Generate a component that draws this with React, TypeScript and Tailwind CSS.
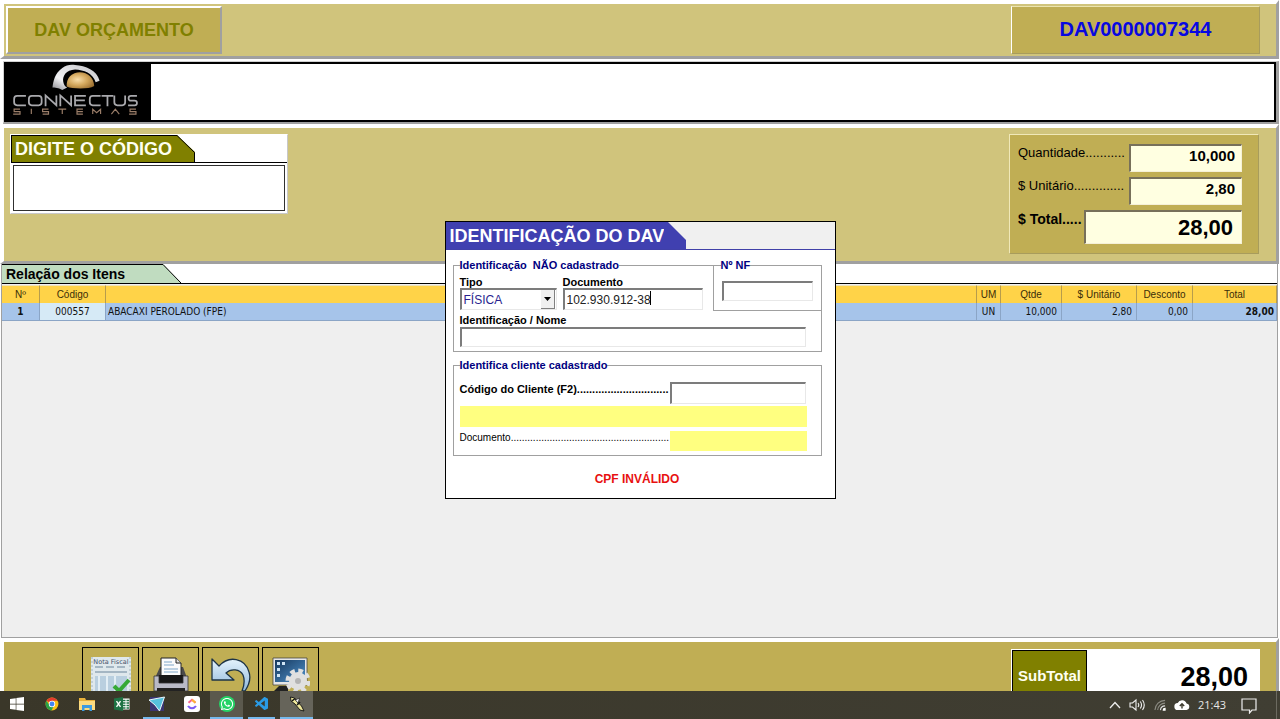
import React from "react";
import { FaWindows, FaWhatsapp } from "react-icons/fa";
import { VscVscode } from "react-icons/vsc";

const arial = "font-['Liberation_Sans',Arial,sans-serif]";
const tahoma = "font-['DejaVu_Sans_Condensed',Tahoma,sans-serif]";
const sunken =
  "border-t-2 border-l-2 border-r border-b border-t-[#7c7c7c] border-l-[#7c7c7c] border-r-[#e8e8e8] border-b-[#e8e8e8] outline-none";
const raisedPanel =
  "border-t-4 border-l-4 border-r-3 border-b-3 border-t-white border-l-white border-r-[#a0a0a0] border-b-[#a0a0a0] mr-px";

function Logo() {
  return (
    <div className="flex w-[147px] shrink-0 flex-col items-center bg-black">
      <svg viewBox="0 0 147 57" className="h-[57px] w-full" role="img" aria-label="Connectus Sistemas">
        <defs>
          <radialGradient id="ball" cx="0.4" cy="0.45" r="0.7">
            <stop offset="0" stopColor="#f8deaa" />
            <stop offset="0.5" stopColor="#d3a75c" />
            <stop offset="1" stopColor="#94692c" />
          </radialGradient>
          <linearGradient id="arc" x1="0" y1="1" x2="1" y2="0">
            <stop offset="0" stopColor="#88888d" />
            <stop offset="0.3" stopColor="#f2f2f4" />
            <stop offset="1" stopColor="#c4c4c8" />
          </linearGradient>
        </defs>
        <path d="M48 24C49 17 50 10 58 4 62 1 66 0.500 71 1c11 1 22 5 25 16l-4 1.500C89 9 80 6 71 5.500 62 6 58 12 59 18c.5 3 2 5 4 6l-5 2.500C55 25 53 24 48 24z" fill="url(#arc)" />
        <path d="M62.500 23C62 14 68 8.500 76 8.500s14 5.500 14.500 14c-3 2-8 2.500-14 2.500s-11-.5-14-2z" fill="url(#ball)" />
        <g transform="translate(-1 -1)">
          <g fill="none" stroke="#a9a9ad" strokeWidth="1.8">
            <path d="M22 33.500H13q-3 0-3 3V40q0 3 3 3h9" />
            <rect x="25" y="33.500" width="13" height="9.500" rx="3" />
            <path d="M42 44V33l11 10V33M57 44V33l11 10V33" />
            <path d="M83 33.500H72V43h11M72 38h10" />
            <path d="M98 33.500h-8q-3 0-3 3V40q0 3 3 3h8" />
            <path d="M99 33.500h12M105 33.500V44" />
            <path d="M112 33v7q0 3 3 3h5q3 0 3-3V33" />
            <path d="M135 33.500h-6q-2.500 0-2.500 2.400T129 38.300h3.500q2.500 0 2.500 2.400T132.500 43H126" />
          </g>
          <path
            d="M16 47h-6v2.500h6V52H9M27.500 46.500V52M45 47h-6v2.500h6V52h-6M55 47h8M59 47v5M80 47h-6v5h6M74 49.500h6M90 52v-5l4 3.500 4-3.500v5M109 52l4-5 4 5M134 47h-6v2.500h6V52h-7"
            fill="none"
            stroke="#9a7d68"
            strokeWidth="1.200"
          />
        </g>
      </svg>
    </div>
  );
}

function InvoiceIcon() {
  return (
    <svg viewBox="0 0 40 34" className="h-[34px] w-10">
      <path d="M0 0h40v34H0z" fill="#dfe8ec" />
      <path d="M1 0v34M39 0v34" stroke="#b9c8cf" strokeWidth="1.500" strokeDasharray="2 2" />
      <text x="20" y="7" textAnchor="middle" fontSize="6.500" fill="#46536b" fontFamily="DejaVu Sans">Nota Fiscal</text>
      <path d="M4 10h8M15 10h8M26 10h8M4 15h32" stroke="#a4b6c3" strokeWidth="2.200" />
      <path d="M4 19h32v15H4z" fill="#b9cfdf" />
      <path d="M8 19v15M16 19v15M24 19v15" stroke="#e2eef5" strokeWidth="2" />
      <path d="M23 29l5 5L38 23" fill="none" stroke="#35a935" strokeWidth="4" />
    </svg>
  );
}

function PrinterIcon() {
  return (
    <svg viewBox="0 0 36 34" className="h-[34px] w-9">
      <path d="M2 21L7 10h23l4 11z" fill="#4a4a4a" />
      <path d="M8 1h15l5 5v14H8z" fill="#fbfbfb" stroke="#222" />
      <path d="M23 1v5h5" fill="#ddd" stroke="#222" />
      <path d="M11 5h8M11 8h10M11 12h14M11 15h14" stroke="#a9c3da" strokeWidth="1.500" />
      <path d="M6 18h24l2 10H4z" fill="#161616" />
      <path d="M1 19h5v7h24v-7h5v15H1z" fill="#b9bac6" stroke="#333" strokeWidth="0.800" />
      <path d="M4 31h28v3H4z" fill="#222" />
    </svg>
  );
}

function UndoIcon() {
  return (
    <svg viewBox="0 0 42 34" className="h-[34px] w-[42px]">
      <defs>
        <linearGradient id="undo" x1="0" y1="0" x2="0" y2="1">
          <stop offset="0" stopColor="#e4f3fc" />
          <stop offset="1" stopColor="#8fb8dc" />
        </linearGradient>
      </defs>
      <path
        d="M2 2v21h22l-8-7c5-5 14-4 17 2 2 5 1 11-1 16h3c4-6 6-13 4-19C35 1 19-2 9 9z"
        fill="url(#undo)"
        stroke="#1d3447"
        strokeWidth="1.300"
        strokeLinejoin="round"
      />
    </svg>
  );
}

function SettingsIcon() {
  return (
    <svg viewBox="0 0 38 34" className="h-[34px] w-[38px]">
      <defs>
        <linearGradient id="screen" x1="0" y1="0" x2="1" y2="1">
          <stop offset="0" stopColor="#16375c" />
          <stop offset="1" stopColor="#4f92cc" />
        </linearGradient>
      </defs>
      <path d="M1 1h34v27H1z" fill="#e6e6e6" stroke="#333" strokeWidth="0.700" />
      <path d="M3 3h30v22H3z" fill="url(#screen)" />
      <path d="M5 5h3v3H5zM10 5h3v3h-3zM5 11h3v3H5zM5 17h3v3H5z" fill="#cfe4f5" />
      <path d="M2 34l5-5h9v5z" fill="#222" />
      <circle cx="26" cy="24" r="10" fill="none" stroke="#e0e0e0" strokeWidth="5" strokeDasharray="4.500 3.350" />
      <circle cx="26" cy="24" r="9" fill="#e0e0e0" />
      <circle cx="26" cy="24" r="3" fill="#b4b4b4" />
    </svg>
  );
}

const tools = [
  { label: "Nota Fiscal", icon: <InvoiceIcon /> },
  { label: "Imprimir", icon: <PrinterIcon /> },
  { label: "Desfazer", icon: <UndoIcon /> },
  { label: "Configurações", icon: <SettingsIcon /> },
];

function ChromeIcon() {
  return (
    <svg viewBox="0 0 24 24" className="size-3.5">
      <circle cx="12" cy="12" r="11" fill="#fbc116" />
      <path d="M12 12L2.500 6.500A11 11 0 0 1 21.500 6.500H12z" fill="#e33b2e" />
      <path d="M2.500 6.500A11 11 0 0 0 11 23l5-9-4-2-4 2z" fill="#2aa147" />
      <circle cx="12" cy="12" r="5.500" fill="#fff" />
      <circle cx="12" cy="12" r="4.200" fill="#4285f4" />
    </svg>
  );
}

function FolderIcon() {
  return (
    <svg viewBox="0 0 16 14" className="h-3.5 w-4">
      <path d="M0 1h6l1 2h9v10H0z" fill="#e9b23c" />
      <path d="M0 4h16v9H0z" fill="#fcdb7f" />
      <path d="M3 14V8h10v6h-2.500v-3h-5v3z" fill="#3d9be0" />
    </svg>
  );
}

function ExcelIcon() {
  return (
    <svg viewBox="0 0 16 14" className="h-3.5 w-4">
      <path d="M8 1.500h7.500v11H8z" fill="#fff" />
      <path d="M9 3.500h2.500M12.500 3.500H15M9 6h2.500M12.500 6H15M9 8.500h2.500M12.500 8.500H15M9 11h2.500M12.500 11H15" stroke="#1f7345" strokeWidth="1.300" />
      <path d="M0 1.500L9 0v14l-9-1.500z" fill="#1f7345" />
      <path d="M2.500 4.200l4 5.600M6.500 4.200l-4 5.600" stroke="#fff" strokeWidth="1.400" />
    </svg>
  );
}

function ArrowAppIcon() {
  return (
    <svg viewBox="0 0 16 16" className="size-4">
      <path d="M1 1h14v14H1z" fill="#3a3470" />
      <path d="M0 4L15.500 1 10.500 15 6 9z" fill="#56c0dc" stroke="#e9f6fa" strokeWidth="1" />
    </svg>
  );
}

function ClickUpIcon() {
  return (
    <svg viewBox="0 0 16 16" className="size-4">
      <rect width="16" height="16" rx="3" fill="#fff" />
      <path d="M4.500 6.700L8 3.700l3.500 3" fill="none" stroke="#f7668f" strokeWidth="2" />
      <path d="M8 3.700l3.500 3" stroke="#fdb532" strokeWidth="2" />
      <path d="M4 10c2.200 3 5.800 3 8 0" fill="none" stroke="#7b5cf5" strokeWidth="2.100" />
    </svg>
  );
}

function BeeIcon() {
  return (
    <svg viewBox="0 0 16 16" className="size-4">
      <path d="M1.500 1l4 1 2 3 5 5 2.500 5-4-1-5-6-4-3z" fill="#efe79a" stroke="#111" strokeWidth="0.900" />
      <path d="M3 5l3-2.500M8 9l3-3" stroke="#111" strokeWidth="1.600" />
      <path d="M6.500 4l4-2-1.500 5z" fill="#fff" stroke="#111" strokeWidth="0.600" />
    </svg>
  );
}

const idleApp = "w-[33px] border-transparent";
const openApp = "mx-[3px] w-[27px] border-[#76b9ed]";

const taskApps = [
  { label: "Iniciar", icon: <FaWindows className="size-4 text-white" />, style: idleApp },
  { label: "Chrome", icon: <ChromeIcon />, style: idleApp },
  { label: "Explorador", icon: <FolderIcon />, style: idleApp },
  { label: "Excel", icon: <ExcelIcon />, style: idleApp },
  { label: "Aplicativo", icon: <ArrowAppIcon />, style: openApp },
  { label: "ClickUp", icon: <ClickUpIcon />, style: idleApp },
  {
    label: "WhatsApp",
    icon: (
      <span className="flex size-4 items-center justify-center rounded-full bg-[#25d366]">
        <FaWhatsapp className="size-3.5 text-white" />
      </span>
    ),
    style: "w-[33px] border-[#76b9ed] bg-[#5b594d]",
  },
  { label: "VS Code", icon: <VscVscode className="size-4 text-[#2a9be6]" />, style: openApp },
  { label: "DAV", icon: <BeeIcon />, style: "w-[33px] border-[#76b9ed] bg-[#66645a]" },
];

function TaskBar() {
  return (
    <nav className="flex h-7 shrink-0 items-stretch justify-between bg-linear-to-r from-[#3a3729] to-[#403e33]">
      <div className="flex gap-0.5">
        {taskApps.map((app) => (
          <button
            key={app.label}
            aria-label={app.label}
            className={`flex items-center justify-center border-b-2 ${app.style}`}
          >
            {app.icon}
          </button>
        ))}
      </div>
      <div className="mr-[3px] flex items-center border-r border-[#6c6a60] pr-[19px] text-[#e8e8e8]">
        <svg viewBox="0 0 12 8" className="mr-2 h-2 w-3" fill="none" stroke="#eee" strokeWidth="1.300">
          <path d="M1 7l5-5.500L11 7" />
        </svg>
        <svg viewBox="0 0 17 14" className="mr-2 h-3.5 w-[17px]" fill="none" stroke="#eee" strokeWidth="1.100">
          <path d="M1 5h2.500L7 2v10L3.500 9H1zM9 5q1.500 2 0 4M11.300 3.500q2.500 3.500 0 7M13.500 2q3.500 5 0 10" />
        </svg>
        <svg viewBox="0 0 13 13" className="mr-2 size-3" fill="none" strokeWidth="1.200">
          <path d="M1 12A11 11 0 0 1 12 1.500M4 12a8 8 0 0 1 8-7.500" stroke="#8d8c84" />
          <path d="M7 12a5 5 0 0 1 5-4.500" stroke="#ddd" />
          <path d="M10 12a2 2 0 0 1 2-2v2z" fill="#fff" stroke="#fff" />
        </svg>
        <svg viewBox="0 0 16 12" className="mr-2 h-3 w-4">
          <path d="M4 11a3.500 3.500 0 0 1-.3-7A4.800 4.800 0 0 1 12.600 4.500 3.300 3.300 0 0 1 12.500 11z" fill="#fff" />
          <path d="M8 9.500V5M5.800 7L8 4.700 10.200 7" fill="none" stroke="#3d3a2e" strokeWidth="1.400" />
        </svg>
        <span className="mr-[15px] font-['Open_Sans','Noto_Sans',sans-serif] text-[11px]">21:43</span>
        <svg viewBox="0 0 16 16" className="mt-0.5 size-4" fill="none" stroke="#eee" strokeWidth="1.200">
          <path d="M1 1h14v11h-4l-2.500 3v-3H1z" />
        </svg>
      </div>
    </nav>
  );
}

function IdentificationDialog() {
  const label = "block text-[11px] leading-3 font-bold text-black";
  const legend = "text-[11px] leading-3 font-bold whitespace-pre text-[#000080]";
  return (
    <div className="absolute inset-0 flex items-center justify-center pt-px">
      <section role="dialog" aria-label="Identificação do DAV" className="w-[391px] border border-black bg-white pb-3">
        <header className="flex h-7 border-b border-[#4040a8] bg-[#f0f0f0]">
          <h2 className="bg-[#4040b0] pl-1 text-lg leading-[29px] font-bold whitespace-nowrap text-white">IDENTIFICAÇÃO DO DAV</h2>
          <svg viewBox="0 0 22 27" className="h-[27px] w-[22px]">
            <path d="M0 0h4l18 18v9H0z" fill="#4040b0" />
          </svg>
        </header>

        <div className="relative mr-[13px] ml-[7px] mt-[9px]">
          <fieldset className="min-w-0 border border-[#a0a0a0] pb-1">
            <legend className={`${legend} ml-1.5`}>{"Identificação  NÃO cadastrado"}</legend>
            <div className="mt-[5px] flex gap-1.5 pl-1.5">
              <div className="w-[97px]">
                <label htmlFor="tipo" className={label}>Tipo</label>
                <div className="relative">
                  <select id="tipo" defaultValue="FÍSICA" className={`${sunken} block h-[22px] w-full appearance-none bg-white pl-0.5 text-xs text-[#2a1f8f]`}>
                    <option>FÍSICA</option>
                    <option>JURÍDICA</option>
                  </select>
                  <span className="pointer-events-none absolute top-0.5 right-0.5 bottom-px flex w-3.5 items-center justify-center border-r border-b border-[#808080] bg-[#f0f0f0]">
                    <svg viewBox="0 0 7 4" className="h-1 w-[7px]">
                      <path d="M0 0h7L3.500 4z" fill="#000" />
                    </svg>
                  </span>
                </div>
              </div>
              <div className="w-[140px]">
                <label htmlFor="documento" className={label}>Documento</label>
                <div className="relative">
                  <input id="documento" defaultValue="102.930.912-38" className={`${sunken} block h-[22px] w-full bg-white pl-0.5 text-xs text-[#222]`} />
                  <span className="absolute top-[3px] left-[87px] h-3.5 w-px bg-black" />
                </div>
              </div>
            </div>
            <div className="mt-1 pr-[15px] pl-1.5">
              <label htmlFor="nome" className={label}>Identificação / Nome</label>
              <input id="nome" className={`${sunken} mt-px block h-5 w-full bg-white text-xs`} />
            </div>
          </fieldset>
          <fieldset className="absolute top-0 right-0 w-[109px] min-w-0 border border-[#a0a0a0] bg-white px-2 pb-[9px]">
            <legend className={`${legend} -ml-px`}>Nº NF</legend>
            <input aria-label="Nº NF" className={`${sunken} mt-2.5 block h-5 w-full bg-white text-xs`} />
          </fieldset>
        </div>

        <fieldset className="mr-[13px] ml-[7px] mt-[7px] min-w-0 border border-[#a0a0a0] pr-3.5 pb-1 pl-1.5">
          <legend className={legend}>Identifica cliente cadastrado</legend>
          <div className="mt-[11px] flex">
            <label htmlFor="cliente" className="w-[210px] text-[11px] leading-[14px] font-bold whitespace-nowrap">
              Código do Cliente (F2)..............................
            </label>
            <input id="cliente" className={`${sunken} mr-px h-[22px] min-w-0 flex-1 bg-white text-xs`} />
          </div>
          <output className="mt-0.5 block h-[21px] bg-[#ffff80]" />
          <div className="mt-1 flex h-5">
            <span className="w-[210px] text-[10px] leading-[14px] whitespace-nowrap">
              Documento.........................................................
            </span>
            <output className="flex-1 bg-[#ffff80]" />
          </div>
        </fieldset>
        <p className="mt-4 pr-1.5 text-center text-xs leading-[14px] font-bold text-[#e81010]">CPF INVÁLIDO</p>
      </section>
    </div>
  );
}

function Totals() {
  const field =
    "min-w-0 flex-1 border-t-2 border-l-2 border-r border-b border-t-[#77705a] border-l-[#77705a] border-r-[#f5f0d8] border-b-[#f5f0d8] bg-[#ffffe1] text-right font-bold outline-none";
  const label = "w-[111px] text-[13px] leading-[18px] whitespace-nowrap";
  return (
    <div className="mr-[17px] flex h-[120px] w-[250px] flex-col gap-[5px] border border-t-[#f0e8b8] border-r-[#a89c5c] border-b-[#a89c5c] border-l-[#f0e8b8] bg-[#c0ae54] pt-[9px] pr-4 pl-2">
      <div className="flex h-7">
        <label htmlFor="qtd" className={label}>Quantidade...........</label>
        <input id="qtd" readOnly value="10,000" className={`${field} pr-1.5 pb-1 text-[15px]`} />
      </div>
      <div className="flex h-7">
        <label htmlFor="unit" className={label}>$ Unitário..............</label>
        <input id="unit" readOnly value="2,80" className={`${field} pr-1.5 pb-1 text-[15px]`} />
      </div>
      <div className="flex h-[34px]">
        <label htmlFor="total" className="w-[66px] text-sm leading-[18px] font-bold whitespace-nowrap">$ Total.....</label>
        <input id="total" readOnly value="28,00" className={`${field} pr-2 text-[22px]`} />
      </div>
    </div>
  );
}

function ItemsTable() {
  const th = "border-t border-r border-t-[#ece2b8] border-r-[#b79c4c] p-0 text-center font-normal";
  const td = "border-r border-b border-r-[#8ba5c6] border-b-[#8ba5c6] p-0";
  return (
    <table className="mt-px w-full table-fixed border-separate border-spacing-0 text-[10px] leading-4">
      <colgroup>
        <col className="w-[38px]" />
        <col className="w-[66px]" />
        <col />
        <col className="w-6" />
        <col className="w-[61px]" />
        <col className="w-[75px]" />
        <col className="w-14" />
        <col className="w-[84px]" />
      </colgroup>
      <thead>
        <tr className="h-[18px] bg-[#ffd348] text-[#3a2d08]">
          <th className={th}>Nº</th>
          <th className={th}>Código</th>
          <th className={th} aria-label="Descrição" />
          <th className={th}>UM</th>
          <th className={th}>Qtde</th>
          <th className={th}>$ Unitário</th>
          <th className={th}>Desconto</th>
          <th className={th}>Total</th>
        </tr>
      </thead>
      <tbody className={tahoma}>
        <tr className="h-[18px] bg-[#a6c4ea] text-[#111]">
          <td className={`${td} text-center font-bold`}>1</td>
          <td className={`${td} bg-[#d6eaf6] text-center`}>000557</td>
          <td className={`${td} pl-0.5`}>ABACAXI PEROLADO (FPE)</td>
          <td className={`${td} text-center`}>UN</td>
          <td className={`${td} pr-1 text-right`}>10,000</td>
          <td className={`${td} pr-1 text-right`}>2,80</td>
          <td className={`${td} pr-1 text-right`}>0,00</td>
          <td className={`${td} pr-0.5 text-right font-bold`}>28,00</td>
        </tr>
      </tbody>
    </table>
  );
}

export default function App() {
  return (
    <div className={`${arial} relative flex h-screen flex-col overflow-hidden bg-white text-black`}>
      <header className={`${raisedPanel} flex h-[59px] shrink-0 items-start justify-between bg-[#d0c47c] pt-0.5 pl-0.5`}>
        <h1 className="flex h-12 w-[216px] items-center justify-center border-2 border-t-white border-r-[#a0a0a0] border-b-[#a0a0a0] border-l-white bg-[#c0ae54] text-lg font-bold text-[#808000]">
          DAV ORÇAMENTO
        </h1>
        <div className="mr-4 flex h-12 w-[249px] items-center justify-center border border-t-[#ece4b0] border-r-[#a89c5c] border-b-[#a89c5c] border-l-white bg-[#c0ae54] pb-0.5 text-xl font-bold text-[#0808e0]">
          DAV0000007344
        </div>
      </header>

      <div className="mt-[2px] mr-px ml-[3px] flex h-[63px] shrink-0 border-t border-r-3 border-b-2 border-l border-t-[#d0d0d0] border-r-[#a0a0a0] border-b-[#a0a0a0] border-l-[#d0d0d0]">
        <div className="flex flex-1 border-2 border-l-0 border-black">
          <Logo />
        </div>
      </div>

      <main className={`${raisedPanel} flex h-[140px] shrink-0 items-start justify-between bg-[#d0c47c] pt-1.5 pl-1.5`}>
        <div className="w-[278px] border border-t-white border-r-[#c8c8c8] border-b-[#c8c8c8] border-l-white bg-white pb-0.5">
          <div className="flex h-7 border-b border-black">
            <label htmlFor="codigo" className="border-t border-l border-black bg-[#808000] pl-[3px] text-lg leading-[27px] font-bold whitespace-nowrap text-[#fffff0]">
              DIGITE O CÓDIGO
            </label>
            <svg viewBox="0 0 23 27" className="h-[27px] w-[23px]">
              <path d="M0 0h5l18 17v10H0z" fill="#808000" />
              <path d="M0 .5h5L22.500 17.500V27" fill="none" stroke="#000" />
            </svg>
          </div>
          <div className="px-0.5 pt-0.5">
            <input id="codigo" className="block h-[46px] w-full border border-[#303030] bg-white px-2 text-2xl outline-none" />
          </div>
        </div>
        <Totals />
      </main>

      <section className="mr-[2px] ml-px flex min-h-0 flex-1 flex-col border-r border-b border-l border-[#a0a0a0] bg-[#efefef]">
        <div className="flex h-5 shrink-0 border-b border-black bg-white">
          <h2 className="border-t border-black bg-[#c0dcc0] pl-1 text-sm leading-[18px] font-bold">Relação dos Itens</h2>
          <svg viewBox="0 0 56 19" className="h-[19px] w-14">
            <path d="M0 0h38l18 19H0z" fill="#c0dcc0" />
            <path d="M0 .5h38L56 19" fill="none" stroke="#000" />
          </svg>
        </div>
        <ItemsTable />
      </section>

      <footer className="mr-px flex h-[53px] shrink-0 justify-between overflow-hidden border-t-4 border-r-3 border-l-4 border-t-white border-r-[#a0a0a0] border-l-white bg-[#c0ae54]">
        <div className="ml-[78px] flex gap-[3px] pt-[5px]">
          {tools.map((tool) => (
            <button key={tool.label} aria-label={tool.label} className="flex h-14 w-[57px] justify-center border border-black pt-[9px]">
              {tool.icon}
            </button>
          ))}
        </div>
        <div className="mt-[7px] mr-4 flex w-[249px] border-t border-l border-white bg-white">
          <span className="w-[75px] border border-b-0 border-black bg-[#808000] pt-[15px] text-center text-[15px] leading-5 font-bold text-[#fffff0]">
            SubTotal
          </span>
          <output className="flex-1 pt-3 pr-3 text-right text-[27px] leading-[30px] font-bold">28,00</output>
        </div>
      </footer>

      <TaskBar />
      <IdentificationDialog />
    </div>
  );
}
